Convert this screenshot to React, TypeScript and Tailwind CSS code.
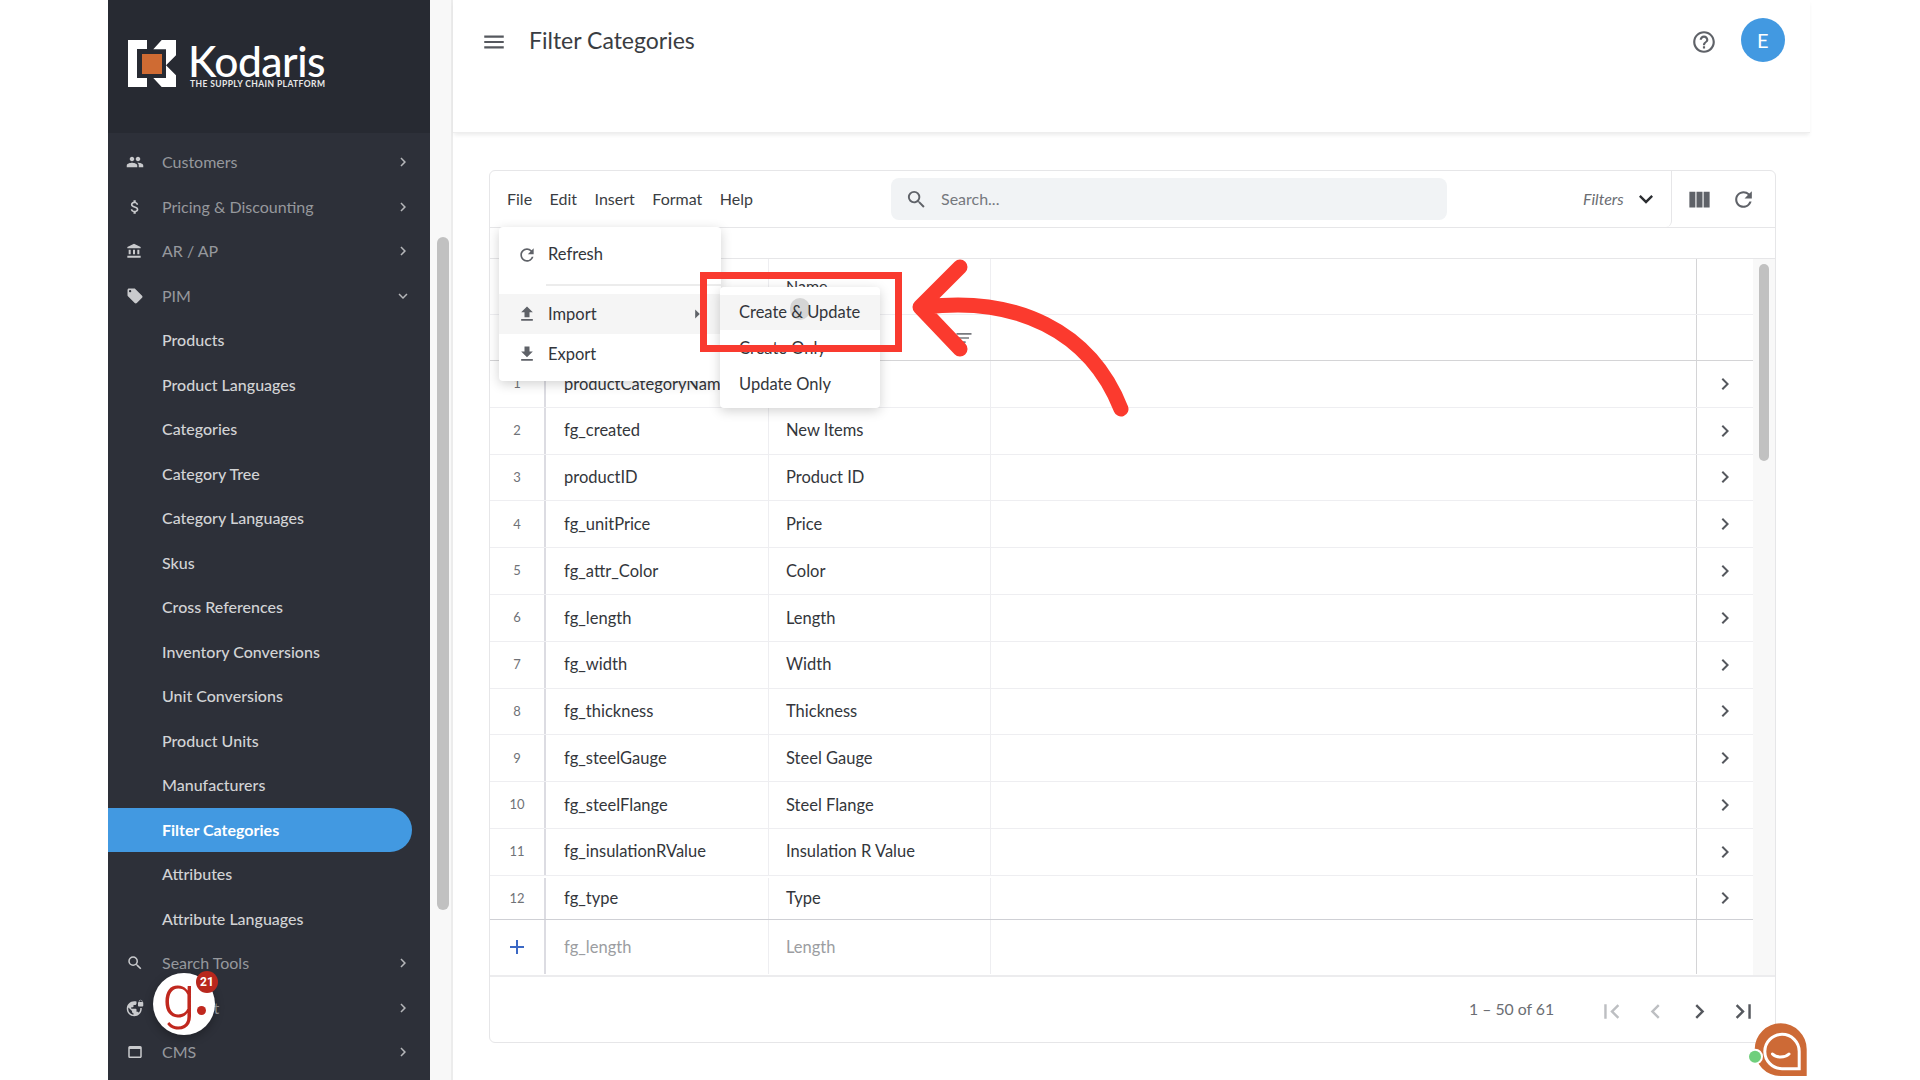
// App.tsx
import React from "react";
import {
  MdAccountBalance,
  MdAdd,
  MdArrowRight,
  MdAttachMoney,
  MdChevronLeft,
  MdChevronRight,
  MdExpandMore,
  MdFileDownload,
  MdFileUpload,
  MdFilterList,
  MdFirstPage,
  MdHelpOutline,
  MdLastPage,
  MdLocalOffer,
  MdMenu,
  MdOutlineWebAsset,
  MdPeople,
  MdRefresh,
  MdSearch,
  MdViewColumn,
  MdVpnLock,
} from "react-icons/md";

const navChildren = [
  "Products",
  "Product Languages",
  "Categories",
  "Category Tree",
  "Category Languages",
  "Skus",
  "Cross References",
  "Inventory Conversions",
  "Unit Conversions",
  "Product Units",
  "Manufacturers",
  "Filter Categories",
  "Attributes",
  "Attribute Languages",
];

const rows = [
  ["1", "productCategoryName", ""],
  ["2", "fg_created", "New Items"],
  ["3", "productID", "Product ID"],
  ["4", "fg_unitPrice", "Price"],
  ["5", "fg_attr_Color", "Color"],
  ["6", "fg_length", "Length"],
  ["7", "fg_width", "Width"],
  ["8", "fg_thickness", "Thickness"],
  ["9", "fg_steelGauge", "Steel Gauge"],
  ["10", "fg_steelFlange", "Steel Flange"],
  ["11", "fg_insulationRValue", "Insulation R Value"],
  ["12", "fg_type", "Type"],
];

const NavSection: React.FC<{ icon: React.ReactNode; label: string; open?: boolean }> = ({
  icon,
  label,
  open,
}) => (
  <div className="flex h-[44.5px] items-center pl-[18px] pr-[18px] text-[16px] text-[#96989d]">
    <span className="flex w-[36px] text-[#c9cacd]">{icon}</span>
    <span className="flex-1">{label}</span>
    {open ? (
      <MdExpandMore size={18} className="text-[#b5b6b9]" />
    ) : (
      <MdChevronRight size={18} className="text-[#b5b6b9]" />
    )}
  </div>
);

const Sidebar = () => (
  <aside className="flex h-full w-[322px] shrink-0 flex-col overflow-hidden bg-[#2d3039]">
    <div className="relative h-[133px] shrink-0 bg-[#272a32]">
      <svg className="absolute left-[20px] top-[40px]" width="48" height="48" viewBox="0 0 48 48">
        <path d="M0 0H19V9H9V38H19V47H0Z" fill="#fff" />
        <path d="M25.3 9.3L33.7 0H48V15.3L38 25.3L48 35.3V47H33.7L25.3 38H38V9.3Z" fill="#fff" />
        <rect x="14" y="14" width="20" height="20" fill="#cf6b33" />
      </svg>
      <div className="absolute left-[80px] top-[34px] text-[42.5px] font-medium leading-[54px] tracking-[-0.5px] text-white">
        Kodaris
      </div>
      <div className="absolute left-[82px] top-[78px] text-[8.5px] font-bold leading-[12px] tracking-[0.4px] text-[#e8e8e8]">
        THE SUPPLY CHAIN PLATFORM
      </div>
    </div>
    <nav className="pt-[7px]">
      <NavSection icon={<MdPeople size={18} />} label="Customers" />
      <NavSection icon={<MdAttachMoney size={18} />} label="Pricing & Discounting" />
      <NavSection icon={<MdAccountBalance size={16} />} label="AR / AP" />
      <NavSection icon={<MdLocalOffer size={18} />} label="PIM" open />
      {navChildren.map((name) =>
        name === "Filter Categories" ? (
          <div
            key={name}
            className="flex h-[44.5px] w-[304px] items-center rounded-r-full bg-[#4299e1] pl-[54px] text-[16px] font-bold text-white"
          >
            {name}
          </div>
        ) : (
          <div
            key={name}
            className="flex h-[44.5px] items-center pl-[54px] text-[16px] font-medium text-[#d2d3d5]"
          >
            {name}
          </div>
        )
      )}
      <NavSection icon={<MdSearch size={18} />} label="Search Tools" />
      <NavSection icon={<MdVpnLock size={18} />} label="Content" />
      <NavSection icon={<MdOutlineWebAsset size={18} />} label="CMS" />
    </nav>
  </aside>
);

const Toolbar = () => (
  <div className="flex h-[57px] items-center border-b border-[#e6e6e8]">
    <div className="flex h-full flex-1 items-center rounded-br-md border-r border-[#e6e6e8]">
      <div className="flex w-[401px] shrink-0 gap-[17.5px] pl-[17px] text-[16px] text-[#3a3d42]">
        <span>File</span>
        <span>Edit</span>
        <span>Insert</span>
        <span>Format</span>
        <span>Help</span>
      </div>
      <div className="flex h-[42px] w-[556px] items-center rounded-lg bg-[#f1f3f5] pl-[14px] text-[16px] text-[#75787d]">
        <MdSearch size={23} className="mr-[13px] text-[#5f6268]" />
        Search...
      </div>
      <span className="ml-[136px] text-[16px] italic text-[#6b6e73]">Filters</span>
      <MdExpandMore size={28} className="ml-[8px] text-[#2b2d31]" />
    </div>
    <div className="flex w-[103px] items-center pl-[14px] text-[#5f6268]">
      <MdViewColumn size={27} />
      <MdRefresh size={25} className="ml-[18px]" />
    </div>
  </div>
);

const DataRow: React.FC<{ row: string[]; last: boolean }> = ({ row, last }) => (
  <div
    className={
      last
        ? "flex h-[43.4px] pt-[2px] text-[16.5px] text-[#33363b]"
        : "flex h-[46.8px] border-b border-[#eeeef1] text-[16.5px] text-[#33363b]"
    }
  >
    <div className="flex w-[56px] items-center justify-center border-r-2 border-[#dcdce2] text-[13px] text-[#6f7277]">
      {row[0]}
    </div>
    <div className="flex w-[223px] items-center overflow-hidden whitespace-nowrap border-r border-[#eeeef1] pl-[18px]">
      {row[1]}
    </div>
    <div className="flex w-[222px] items-center border-r border-[#eeeef1] pl-[17px]">{row[2]}</div>
    <div className="flex-1 border-r border-[#d4d4d6]" />
    <div className="flex w-[56px] items-center justify-center text-[#55585e]">
      <MdChevronRight size={24} />
    </div>
  </div>
);

const Table = () => (
  <div className="flex h-[716px]">
    <div className="w-[1263px] shrink-0">
      <div className="flex h-[56px] border-b border-[#eeeef1]">
        <div className="w-[56px] border-r-2 border-[#dcdce2]" />
        <div className="w-[223px] border-r border-[#eeeef1]" />
        <div className="w-[222px] border-r border-[#eeeef1] pl-[17px] pt-[15px] text-[16px] text-[#33363b]">
          Name
        </div>
        <div className="flex-1 border-r border-[#d4d4d6]" />
        <div className="w-[56px]" />
      </div>
      <div className="flex h-[46px] border-b border-[#d4d4d6]">
        <div className="w-[56px] border-r-2 border-[#dcdce2]" />
        <div className="w-[223px] border-r border-[#eeeef1]" />
        <div className="flex w-[222px] items-center justify-end border-r border-[#eeeef1] pr-[16px] text-[#77797e]">
          <MdFilterList size={20} />
        </div>
        <div className="flex-1 border-r border-[#d4d4d6]" />
        <div className="w-[56px]" />
      </div>
      {rows.map((row, i) => (
        <DataRow key={row[0]} row={row} last={i === rows.length - 1} />
      ))}
      <div className="flex h-[55px] border-t border-[#cfd0d5] text-[16.5px] text-[#9b9da1]">
        <div className="flex w-[56px] items-center justify-center border-r-2 border-[#dcdce2] text-[#3b68c4]">
          <MdAdd size={24} />
        </div>
        <div className="flex w-[223px] items-center border-r border-[#eeeef1] pl-[18px]">fg_length</div>
        <div className="flex w-[222px] items-center border-r border-[#eeeef1] pl-[17px]">Length</div>
        <div className="flex-1 border-r border-[#d4d4d6]" />
        <div className="w-[56px]" />
      </div>
    </div>
    <div className="flex-1 bg-[#f8f8f8] px-[6px] pt-[5px]">
      <div className="h-[197px] rounded-full bg-[#c1c1c1]" />
    </div>
  </div>
);

const Pagination = () => (
  <div className="flex h-[69px] items-center border-t-2 border-[#ececee] text-[#55585e]">
    <span className="mb-[3px] ml-[979px] w-[84px] whitespace-nowrap text-[15.8px] text-[#6b6e73]">1 – 50 of 61</span>
    <MdFirstPage size={29} className="ml-[44px] mt-[2px] text-[#bdbfc2]" />
    <MdChevronLeft size={29} className="ml-[15px] mt-[2px] text-[#bdbfc2]" />
    <MdChevronRight size={29} className="ml-[15px] mt-[2px]" />
    <MdLastPage size={29} className="ml-[15px] mt-[2px]" />
  </div>
);

const MenuLayer = () => (
  <>
    <div className="absolute left-[499px] top-[227px] z-10 h-[154px] w-[222px] rounded bg-white shadow-[0_3px_12px_rgba(0,0,0,0.18)]">
      <div className="flex h-[55px] items-center pl-[18px] text-[16.5px] text-[#33363b]">
        <MdRefresh size={20} className="mr-[11px] text-[#5f6268]" />
        Refresh
      </div>
      <div className="ml-[47px] mt-[2px] h-[2px] bg-[#ececec]" />
      <div className="relative mt-[8px] flex h-[40px] items-center bg-[#f5f5f5] pl-[18px] text-[16.5px] text-[#33363b]">
        <MdFileUpload size={20} className="mr-[11px] text-[#5f6268]" />
        Import
        <MdArrowRight size={22} className="absolute left-[187px] top-[9px] text-[#5f6268]" />
      </div>
      <div className="flex h-[40px] items-center pl-[18px] text-[16.5px] text-[#33363b]">
        <MdFileDownload size={20} className="mr-[11px] text-[#5f6268]" />
        Export
      </div>
    </div>
    <div className="absolute left-[720px] top-[287px] z-10 h-[121px] w-[160px] rounded bg-white pt-[8px] text-[16.5px] text-[#33363b] shadow-[0_3px_12px_rgba(0,0,0,0.18)]">
      <div className="relative flex h-[35px] items-center bg-[#f5f5f5] pl-[19px]">
        <span className="absolute left-[70px] top-[3px] h-[22px] w-[20px] rounded-full bg-[#d5d5d5]" />
        <span className="relative">Create &amp; Update</span>
      </div>
      <div className="flex h-[36px] items-center pl-[19px]">Create Only</div>
      <div className="flex h-[36px] items-center pl-[19px]">Update Only</div>
    </div>
    <div className="absolute left-[700px] top-[272px] z-20 h-[80px] w-[202px] border-[7px] border-[#f93a2f]" />
    <svg className="absolute left-0 top-0 z-20" width="1920" height="1080" fill="none">
      <path
        d="M960 267L920 307L960 349M925 307C1015 296 1090 330 1121 409"
        stroke="#fb3a2e"
        strokeWidth="15"
        strokeLinecap="round"
        strokeLinejoin="round"
      />
    </svg>
  </>
);

const Widgets = () => (
  <>
    <div className="absolute left-[153px] top-[973px] z-30 flex h-[62px] w-[62px] items-center justify-center rounded-full bg-white font-['Roboto',sans-serif] shadow-[0_3px_10px_rgba(0,0,0,0.3)]">
      <span className="-mt-[14px] text-[60px] font-light leading-none text-[#c0281e]">g</span>
      <span className="ml-[1px] mt-[12px] h-[9px] w-[9px] rounded-full bg-[#c0281e]" />
      <span className="absolute left-[43px] top-[-2px] flex h-[22px] w-[22px] items-center justify-center rounded-full bg-[#b8271d] text-[12px] font-bold text-white">
        21
      </span>
    </div>
    <svg className="absolute left-[1747px] top-[1023px] z-30" width="60" height="56" viewBox="0 0 60 56">
      <path d="M7.7 26.3A26 26 0 0 1 59.7 26.3V53H33.7A26 26 0 0 1 7.7 26.3Z" fill="#cd6a36" />
      <path
        d="M17.8 28.5A17.2 17.2 0 0 1 52.2 28.5V45.7H35A17.2 17.2 0 0 1 17.8 28.5Z"
        fill="#cd6a36"
        stroke="#fff"
        strokeWidth="3"
      />
      <path d="M25.5 31C29 35 38 35 42 31" stroke="#fff" strokeWidth="3" strokeLinecap="round" fill="none" />
      <circle cx="8" cy="33.7" r="8" fill="#fff" />
      <circle cx="8" cy="33.7" r="6" fill="#6fcf7c" />
    </svg>
  </>
);

export default function App() {
  return (
    <div className="relative flex h-[1080px] w-[1920px] overflow-hidden bg-white font-['Lato',sans-serif]">
      <div className="w-[108px] shrink-0" />
      <Sidebar />
      <div className="w-[23px] shrink-0 border-r-2 border-[#ececec] bg-[#f8f8f8] pl-[7px] pt-[237px]">
        <div className="h-[673px] w-[12px] rounded-full bg-[#c1c1c1]" />
      </div>
      <main className="w-[1357px] shrink-0">
        <header className="flex h-[133px] items-start border-b border-[#eeeeee] shadow-[0_3px_4px_-1px_rgba(0,0,0,0.08)]">
          <MdMenu size={26} className="ml-[28px] mt-[29px] text-[#55585e]" />
          <h1 className="ml-[22px] mt-[23px] text-[23px] leading-[34px] text-[#3a3d42]">Filter Categories</h1>
          <MdHelpOutline size={26} className="ml-[996px] mt-[29px] text-[#5f6268]" />
          <div className="ml-[24px] mt-[18px] flex h-[44px] w-[44px] items-center justify-center rounded-full bg-[#4299e1] text-[20px] text-white">
            E
          </div>
        </header>
        <section className="ml-[36px] mt-[37px] h-[873px] w-[1287px] rounded-md border border-[#e6e6e8]">
          <Toolbar />
          <div className="h-[31px] border-b border-[#e6e6e8]" />
          <Table />
          <Pagination />
        </section>
      </main>
      <MenuLayer />
      <Widgets />
    </div>
  );
}
